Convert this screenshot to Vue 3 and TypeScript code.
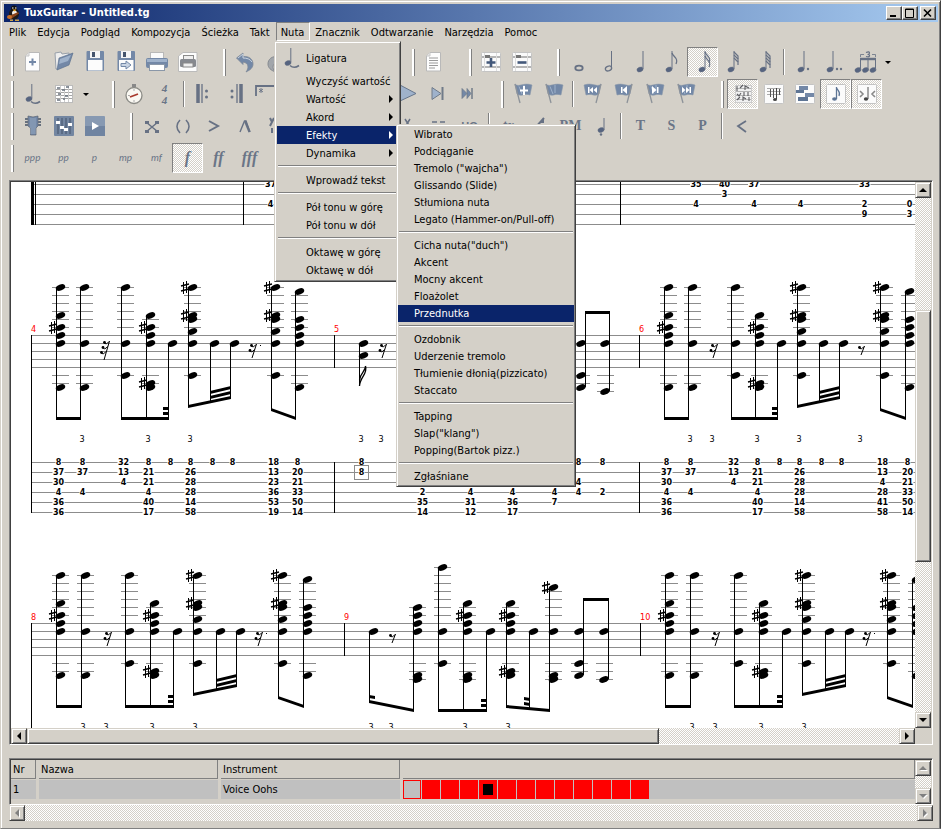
<script setup lang="ts">
import { ref } from 'vue'

/* ---------- icons ---------- */
const INK = '#677184'
const BLUE = '#7388a7'
const PALE = '#9fb2cb'

const head = (x: number, y: number, open = false): string =>
  `<ellipse cx="${x}" cy="${y}" rx="3.2" ry="2.3" transform="rotate(-22 ${x} ${y})" fill="${open ? 'none' : '#566480'}" stroke="${INK}" stroke-width="${open ? 1.3 : 0.4}"/>`
const stem = (x: number, y1: number, y2: number): string =>
  `<path d="M${x} ${y1}V${y2}" stroke="${INK}" stroke-width="1"/>`
const flag = (x: number, y: number): string =>
  `<path d="M${x} ${y}C${x + 1} ${y + 4} ${x + 7} ${y + 5} ${x + 4} ${y + 11}" fill="none" stroke="${INK}" stroke-width="1.3"/>`
const shortFlags = (x: number, n: number): string =>
  Array.from({ length: n }, (_, i) => `<path d="M${x} ${2 + i * 3}l4 4v3" fill="none" stroke="${INK}" stroke-width="1.2"/>`).join('')
const page = `<path d="M8 2.5H18.500V21H4.500V6Z" fill="#fdfdfd" stroke="#b9b9b9"/><path d="M8 2.500V6H4.500" fill="#e4e4e4" stroke="#c8c8c8"/>`
const tile = `<rect x="2.500" y="2.500" width="19" height="19" rx="1" fill="#fbfbfb" stroke="#c4c4c4"/>`
const floppy = `<rect x="3.500" y="1" width="17.500" height="20" rx="1" fill="${BLUE}"/><rect x="7" y="1" width="10" height="7" fill="#f5f5f5"/><rect x="9" y="2" width="3" height="5" fill="#44546c"/><rect x="5" y="10" width="14.500" height="10.500" fill="#fcfcfc"/>`
const pennant = `<path d="M4 2C8 6 12 0 21 3L19 13C13 11 10 15 6 12Z" fill="${BLUE}" stroke="#8b98aa" stroke-width=".6"/><path d="M8 4.500L11 12M13 3V11" stroke="${PALE}"/><path d="M4 2L9 21" stroke="#8d9299" stroke-width="1.300"/>`
const pennantLeft = `<path d="M20 2C16 6 12 0 3 3L5 13C11 11 14 15 18 12Z" fill="${BLUE}" stroke="#8b98aa" stroke-width=".6"/><path d="M20 2L15 21" stroke="#8d9299" stroke-width="1.300"/>`
const white = (d: string): string => `<path d="${d}" fill="#fff"/>`

const icons: Record<string, string> = {
  new: page + `<path d="M11.500 8.500V15.500M8 12H15" stroke="${BLUE}" stroke-width="2"/>`,
  open: `<path d="M3 3L9 2L10 4L17 3V8L6 19H4Z" fill="#eee" stroke="#98a0aa"/><path d="M7 8L21 3L17 15L5 20Z" fill="${BLUE}" stroke="#566b8a" stroke-width=".6"/><path d="M8 9L19 5L16 11L7 14Z" fill="${PALE}"/>`,
  save: floppy,
  saveAs: floppy + `<path d="M7 13.500H12V11L17 15L12 19V16.500H7Z" fill="#c9d4e3" stroke="${BLUE}"/>`,
  print: `<rect x="5.500" y="2.500" width="13" height="8" fill="#fafafa" stroke="#b8b8b8"/><rect x="1" y="8" width="22" height="10" rx="2" fill="${BLUE}"/><rect x="2" y="9" width="20" height="3" fill="${PALE}"/><rect x="4.500" y="14.500" width="15" height="6" fill="#fff" stroke="#8a97a8"/>`,
  preview: `<path d="M7 2.500H21V21.500H2.500V6Z" fill="#fdfdfd" stroke="#bbb"/><rect x="7.500" y="5.500" width="10" height="5" fill="#eee" stroke="#8b8b8b"/><rect x="4" y="9" width="16" height="8" rx="1.500" fill="#86898f"/><rect x="7" y="13" width="10" height="4" fill="#eee" stroke="#888"/>`,
  undo: `<path d="M3.500 8L10 3V6.500C16 6 20 9 20 14C20 18 17 20 13 22C16 18 16 13 10 12V14.500Z" fill="${BLUE}" stroke="#7d8897" stroke-width=".8"/><path d="M5 8L10 4V8C14 8 17 9 19 12" fill="none" stroke="#c9d3df"/>`,
  redo: `<path d="M20.500 8L14 3V6.500C8 6 4 9 4 14C4 18 7 20 11 22C8 18 8 13 14 12V14.500Z" fill="#a2a6ab" stroke="#868a90"/>`,
  score: page + `<path d="M7 8H16M7 10.500H16M7 13H16M7 15.500H16M7 18H13" stroke="#9a9a9a"/>`,
  trackAdd: tile + `<path d="M3 7H21M3 17H21" stroke="#b5b5b5" stroke-width="2"/><path d="M5.500 3V21M17.500 3V21" stroke="#ddd"/><rect x="6" y="5" width="5" height="3" fill="#777"/><path d="M12 8V17M7.500 12.500H16.500" stroke="#43587a" stroke-width="2.600"/>`,
  trackDel: tile + `<path d="M3 7H21M3 17H21" stroke="#b5b5b5" stroke-width="2"/><path d="M5.500 3V21M17.500 3V21" stroke="#ddd"/><rect x="6" y="5" width="5" height="3" fill="#777"/><path d="M7.500 12.500H16.500" stroke="#43587a" stroke-width="2.600"/>`,
  whole: `<ellipse cx="12" cy="18" rx="3.700" ry="2.400" fill="none" stroke="${INK}" stroke-width="1.800"/>`,
  half: head(10.5, 18.5, true) + stem(13.5, 1, 18),
  quarter: head(11, 19.5) + stem(14, 1, 19),
  eighth: head(9, 19.5) + stem(12, 1, 19) + flag(12, 3),
  sixteenth: head(11, 19.5) + stem(14, 1, 19) + flag(14, 2) + flag(14, 6),
  thirty: head(9, 19.5) + stem(12, 1, 19) + shortFlags(12, 3),
  sixty: head(10, 19.5) + stem(13, 1, 19) + shortFlags(13, 4),
  dotted: head(9, 19.5) + stem(12, 1, 19) + `<circle cx="16" cy="19" r="1.200" fill="${INK}"/>`,
  dotted2: head(7, 19.5) + stem(10, 1, 19) + `<circle cx="14" cy="19" r="1.200" fill="${INK}"/><circle cx="18" cy="19" r="1.200" fill="${INK}"/>`,
  tuplet: head(4, 20) + head(11.5, 20) + head(19, 20) + stem(6.5, 9, 20) + stem(14, 9, 20) + stem(21.5, 9, 20) + `<path d="M6 9H22" stroke="${INK}" stroke-width="2.400"/><path d="M6.500 7V4.500H10M18 4.500H21.500V7" fill="none" stroke="${INK}" stroke-width=".8"/><path d="M12 2.500Q15.500 1 15.500 3Q15.500 4.500 13.500 4.500Q16 4.500 15.500 6Q15 7.500 12 6.500" fill="none" stroke="${INK}" stroke-width="1.200"/>`,
  tie: head(8, 17) + stem(10.8, 2, 16) + `<path d="M10 19.500Q14 23 19 19.500" fill="none" stroke="${INK}" stroke-width="1.600"/>`,
  staff: `<rect x="3.500" y="3.500" width="17" height="17" fill="#fff" stroke="#bbb"/><path d="M4 7.500H20M4 10.500H20M4 13.500H20M4 16.500H20" stroke="#a5a5a5"/><path d="M8.500 4V20M12.500 4V20M16.500 4V20" stroke="#ccc"/><path d="M5 6h3M10 8h3M14 5h3M6 12h3M13 14h3M5 18h3M11 17h2" stroke="#68717e" stroke-width="1.500"/>`,
  metronome: `<circle cx="12" cy="13.500" r="8" fill="#faf8f2" stroke="#8a8a85" stroke-width="1.300"/><path d="M10 2H14V5H10Z" fill="#888"/><path d="M8 15L16 12" stroke="#a8392c" stroke-width="1.800"/><path d="M12 7V9M12 18V20M6 13.500H8" stroke="#aaa"/>`,
  repeatOpen: `<path d="M6 2V21" stroke="${INK}" stroke-width="3.500"/><path d="M10 2V21" stroke="${INK}" stroke-width="1.300"/><circle cx="14.500" cy="9" r="1.500" fill="${INK}"/><circle cx="14.500" cy="15" r="1.500" fill="${INK}"/>`,
  repeatClose: `<path d="M18 2V21" stroke="${INK}" stroke-width="3.500"/><path d="M14 2V21" stroke="${INK}" stroke-width="1.300"/><circle cx="9" cy="9" r="1.500" fill="${INK}"/><circle cx="9" cy="15" r="1.500" fill="${INK}"/>`,
  repeatAlt: `<path d="M2 14V4H24" fill="none" stroke="${INK}" stroke-width="1.800"/><path d="M7 6V11M5 7L9 10M9 7L5 10" stroke="${INK}" stroke-width=".9"/>`,
  first: `<path d="M5 6V18M11 6L6 12L11 18ZM17 6L12 12L17 18Z" fill="${BLUE}" stroke="#707b89"/>`,
  prev: `<path d="M6 6V18M16 6L7 12L16 18Z" fill="${BLUE}" stroke="#707b89"/>`,
  stop: `<rect x="5" y="5" width="13" height="13" fill="${BLUE}"/>`,
  play: `<path d="M5 3L21 11.500L5 19Z" fill="${PALE}" stroke="#66758b"/>`,
  next: `<path d="M6 5.500L15 11.500L6 17.500Z" fill="${PALE}" stroke="#707b89"/><path d="M16.500 5V18" stroke="#707b89" stroke-width="2"/>`,
  last: `<path d="M5 6.500L10 11.500L5 16.500ZM10 6.500L14 11.500L10 16.500Z" fill="${BLUE}" stroke="#707b89" stroke-width=".8"/><path d="M15 6V17" stroke="#707b89" stroke-width="1.500"/>`,
  markAdd: pennant + `<path d="M13 4V13M9 8.500H17" stroke="#fff" stroke-width="2"/>`,
  markList: pennant,
  markFirst: pennantLeft + white('M7 5H8.500V11H7ZM12 5V11L8.500 8ZM16 5V11L12.500 8Z'),
  markPrev: pennantLeft + white('M9 5H10.500V11H9ZM15 4V12L10.500 8Z'),
  markNext: pennant + white('M14 5H15.500V11H14ZM9 4V12L13.500 8Z'),
  markLast: pennant + white('M15.500 5H17V11H15.500ZM8 5V11L11.500 8ZM12 5V11L15.500 8Z'),
  multitrack: `<rect x="4.500" y="3.500" width="16" height="17" fill="#f1f1f1" stroke="#ccc"/><path d="M5 6.500H20M5 9.500H20M5 13.500H20M5 17.500H20" stroke="#b4b4b4"/><path d="M6 4v5M9 6l3-3M14 8v-4l4 2M6 12l2 2 2-3M13 14v-4M17 10v4M6 18l3-3M12 19v-4l3 2M18 19v-4" fill="none" stroke="#5c5c60" stroke-width="1.100"/>`,
  linear: tile + `<path d="M5 6.500H19M5 9.500H19M5 12.500H19" stroke="#aaa"/><path d="M8.500 7V15M11.500 7V16M17.500 7V13" stroke="#555"/><path d="M14.500 6V17" stroke="#444"/><ellipse cx="13" cy="17.500" rx="2" ry="1.500" fill="#444"/>`,
  edit: tile + `<rect x="6" y="4" width="9" height="4" fill="${BLUE}"/><rect x="3" y="8" width="8" height="3" fill="#5e7595"/><rect x="12" y="11" width="9" height="4" fill="${BLUE}"/><rect x="5" y="15" width="10" height="4" fill="#5e7595"/>`,
  noteTile: tile + `<ellipse cx="10.500" cy="17" rx="2.400" ry="1.800" fill="#5e7595"/><path d="M12.500 17V5C13 9 17 9 15 14" fill="none" stroke="#5e7595" stroke-width="1.300"/>`,
  spread: tile + `<ellipse cx="11" cy="17" rx="2.200" ry="1.700" fill="#444"/><path d="M13 17V5" stroke="#555"/><path d="M5 9L8 12L5 15M20 9L17 12L20 15" fill="none" stroke="#888" stroke-width="1.600"/>`,
  guitar: `<path d="M7 2L12 3L17 2V12L15 14V21H9.500V14L7 12Z" fill="${BLUE}" stroke="#5b6674" stroke-width=".7"/><path d="M4 5H7M4 8H7M4 11H7M17 5H20M17 8H20M17 11H20" stroke="#68717e" stroke-width="2"/><path d="M10 4V20M12 4V20M14 4V20" stroke="#b7c4d6" stroke-width=".5"/>`,
  mixer: `<rect x="2" y="2" width="20" height="20" rx="1" fill="#7386a1"/><path d="M6 4V20M10 4V20M14 4V20M18 4V20" stroke="#44536a"/><rect x="4" y="7" width="4" height="3" fill="#fff"/><rect x="8" y="12" width="4" height="3" fill="#fff"/><rect x="12" y="14" width="4" height="3" fill="#fff"/><rect x="16" y="9" width="4" height="3" fill="#fff"/>`,
  player: `<rect x="2" y="2" width="20" height="20" rx="1" fill="#8799b2"/><path d="M2 12H22V22H2Z" fill="#7084a1"/><path d="M9 8L16 12L9 16Z" fill="#fff"/>`,
  dead: `<path d="M6 8L18 18M18 8L6 18" stroke="${INK}" stroke-width="1.500"/><path d="M5 7h4v3h-4zM15 7h4v3h-4zM5 16h4v3h-4zM15 16h4v3h-4z" fill="${INK}"/>`,
  ghost: `<path d="M9 6C5 10 5 15 9 19M15 6C19 10 19 15 15 19" fill="none" stroke="${INK}" stroke-width="1.600"/>`,
  accent: `<path d="M7 7L16 12L7 17" fill="none" stroke="${INK}" stroke-width="2"/>`,
  heavy: `<path d="M7 18L11.500 7L13 7L17 18" fill="none" stroke="${INK}" stroke-width="1.400"/><path d="M12 7L16.500 18" stroke="${INK}" stroke-width="2.200"/>`,
  harmonic: `<path d="M6 4L8 8M10 4L6 12M8 14V19" stroke="${INK}" stroke-width="2"/>`,
  grace: `<path d="M9 5L14 13M14 5L9 13" stroke="${INK}" stroke-width="1.500"/>`,
  bend: `<path d="M5 8H10M13 8H18" stroke="${INK}" stroke-width="1.500"/>`,
  slide: `<path d="M8 13L16 4" stroke="${INK}" stroke-width="2"/><path d="M11 9l5-5v5z" fill="${INK}"/>`,
  staccato: head(11, 16) + stem(14, 4, 16) + `<circle cx="11" cy="20.500" r="1.200" fill="${INK}"/>`,
  fade: `<path d="M16 7L8 12L16 18" fill="none" stroke="${INK}" stroke-width="1.800"/>`,
}

interface Tool { kind?: 'sep' | 'arrow'; id?: string; label?: string; text?: string; style?: string; on?: boolean }
interface Band { width?: number; tools: Tool[] }
const b = (id: string, label: string, on = false): Tool => ({ id, label, on })
const t = (text: string, style: string, on = false): Tool => ({ text, style, on })
const sep: Tool = { kind: 'sep' }
const arrow: Tool = { kind: 'arrow' }

const toolbars: Band[][] = [
  [
    { width: 212, tools: [b('new', 'Nowy'), b('open', 'Otwórz'), b('save', 'Zapisz'), b('saveAs', 'Zapisz jako'), b('print', 'Drukuj'), b('preview', 'Podgląd wydruku')] },
    { width: 189, tools: [b('undo', 'Cofnij'), b('redo', 'Ponów')] },
    { width: 57, tools: [b('score', 'Właściwości')] },
    { width: 88, tools: [b('trackAdd', 'Dodaj ścieżkę'), b('trackDel', 'Usuń ścieżkę')] },
    { tools: [b('whole', 'Cała nuta'), b('half', 'Półnuta'), b('quarter', 'Ćwierćnuta'), b('eighth', 'Ósemka'), b('sixteenth', 'Szesnastka', true), b('thirty', 'Trzydziestodwójka'), b('sixty', 'Sześćdziesięcioczwórka'), sep, b('dotted', 'Kropka'), b('dotted2', 'Dwie kropki'), b('tuplet', 'Triola'), arrow] },
  ],
  [
    { width: 101, tools: [b('tie', 'Ligatura'), b('staff', 'Akord'), arrow] },
    { width: 180, tools: [b('metronome', 'Tempo'), t('4/4', 'meter'), sep, b('repeatOpen', 'Początek powtórki'), b('repeatClose', 'Koniec powtórki'), b('repeatAlt', 'Volta')] },
    { width: 209, tools: [b('first', 'Pierwszy takt'), b('prev', 'Poprzedni takt'), b('stop', 'Stop'), b('play', 'Odtwarzaj'), b('next', 'Następny takt'), b('last', 'Ostatni takt')] },
    { width: 220, tools: [b('markAdd', 'Dodaj znacznik'), b('markList', 'Lista znaczników'), sep, b('markFirst', 'Pierwszy znacznik'), b('markPrev', 'Poprzedni znacznik'), b('markNext', 'Następny znacznik'), b('markLast', 'Ostatni znacznik')] },
    { tools: [b('multitrack', 'Wiele ścieżek', true), b('linear', 'Układ liniowy'), b('edit', 'Edycja'), b('noteTile', 'Partytura', true), b('spread', 'Zwarty układ', true)] },
  ],
  [
    { width: 119, tools: [b('guitar', 'Gryf'), b('mixer', 'Mikser'), b('player', 'Transport')] },
    { tools: [b('dead', 'Stłumiona nuta'), b('ghost', 'Cicha nuta'), b('accent', 'Akcent'), b('heavy', 'Mocny akcent'), b('harmonic', 'Flażolet'), sep, b('bend', 'Podciąganie'), b('slide', 'Glissando'), b('bend', 'Wibrato'), b('grace', 'Przednutka'), b('bend', 'Wajcha'), t('HO', 'sans'), sep, t('tr', 'serif'), b('slide', 'Uderzenie tremolo'), t('PM', 'serif'), b('staccato', 'Staccato'), sep, t('T', 'serif'), t('S', 'serif'), t('P', 'serif'), sep, b('fade', 'Zgłaśnianie')] },
  ],
  [
    { tools: [t('ppp', 'soft'), t('pp', 'soft'), t('p', 'soft'), t('mp', 'soft'), t('mf', 'soft'), t('f', 'loud', true), t('ff', 'loud'), t('fff', 'loud')] },
  ],
]

/* ---------- menus ---------- */
const menus = ['Plik', 'Edycja', 'Podgląd', 'Kompozycja', 'Ścieżka', 'Takt', 'Nuta', 'Znacznik', 'Odtwarzanie', 'Narzędzia', 'Pomoc']
const openMenu = ref('Nuta')

interface Entry { text: string; more?: boolean; icon?: string }
const noteMenu: Entry[][] = [
  [{ text: 'Ligatura', icon: 'tie' }, { text: 'Wyczyść wartość' }, { text: 'Wartość', more: true }, { text: 'Akord', more: true }, { text: 'Efekty', more: true }, { text: 'Dynamika', more: true }],
  [{ text: 'Wprowadź tekst' }],
  [{ text: 'Pół tonu w górę' }, { text: 'Pół tonu w dół' }],
  [{ text: 'Oktawę w górę' }, { text: 'Oktawę w dół' }],
]
const effectMenu: string[][] = [
  ['Wibrato', 'Podciąganie', 'Tremolo ("wajcha")', 'Glissando (Slide)', 'Stłumiona nuta', 'Legato (Hammer-on/Pull-off)'],
  ['Cicha nuta("duch")', 'Akcent', 'Mocny akcent', 'Floażolet', 'Przednutka'],
  ['Ozdobnik', 'Uderzenie tremolo', 'Tłumienie dłonią(pizzicato)', 'Staccato'],
  ['Tapping', 'Slap("klang")', 'Popping(Bartok pizz.)'],
  ['Zgłaśniane'],
]
const activeEntry = ref('Efekty')
const activeEffect = ref('Przednutka')

/* ---------- score ---------- */
interface Chord { x: number; notes: string; end: number; up?: boolean }
interface Beam { x1: number; y1: number; x2: number; y2: number }
interface Rest { x: number; y: number; hooks: number; dot?: boolean }
interface Measure { n: number; bar: number; chords: Chord[]; beams: Beam[]; rests: Rest[] }

const shapes = ['-12 -5 -2# 0 2 13', '-12 2 13', '-12 2 10', '-5 -2# 0 2 12# 13', '2', '-12# -5# -4 -1 2 10', '2', '2', '-12# -5# -4 -1 2 10', '-11 -4 -2 0 2 13']
const ends = [83, 83, 83, 83, 83, 71, 66, 62, 74, 83]

function ensemble(n: number, bar: number, xs: number[], rests: Rest[]): Measure {
  const [a, b2, c, , e, f, g, h, i, j] = xs
  return {
    n, bar, rests,
    chords: xs.map((x, k) => ({ x, notes: shapes[k], end: ends[k] })),
    beams: [
      { x1: a, y1: 83, x2: b2 + 1, y2: 83 },
      { x1: c, y1: 83, x2: e + 1, y2: 83 },
      { x1: e - 5, y1: 73, x2: e + 1, y2: 73 },
      { x1: e - 5, y1: 78, x2: e + 1, y2: 78 },
      { x1: f, y1: 71, x2: h + 1, y2: 62 },
      { x1: g, y1: 57, x2: h + 1, y2: 52 },
      { x1: g, y1: 62, x2: h + 1, y2: 57 },
      { x1: i, y1: 74, x2: j + 1, y2: 83 },
    ],
  }
}

const systems: { top: number; measures: Measure[]; triplets: number[] }[] = [
  {
    top: 335,
    triplets: [82, 148, 190, 361, 381, 690, 712, 757, 799, 860],
    measures: [
      ensemble(4, 31, [56, 80, 121, 146, 168, 188, 210, 230, 271, 295], [{ x: 106, y: 6, hooks: 3 }, { x: 253, y: 9, hooks: 2, dot: true }]),
      {
        n: 5, bar: 334,
        chords: [{ x: 359, notes: '2 5', end: 51 }, { x: 585, notes: '2 10 13', end: -23, up: true }, { x: 609, notes: '2 14', end: -23, up: true }],
        beams: [{ x1: 585, y1: -23, x2: 610, y2: -23 }],
        rests: [{ x: 383, y: 9, hooks: 2 }],
      },
      ensemble(6, 639, [664, 688, 731, 755, 777, 797, 819, 839, 880, 905], [{ x: 714, y: 9, hooks: 2 }, { x: 861, y: 11, hooks: 1 }]),
    ],
  },
  {
    top: 623,
    triplets: [83, 106, 152, 195, 371, 391, 465, 508, 692, 715, 761, 804],
    measures: [
      ensemble(8, 31, [56, 81, 125, 150, 173, 193, 216, 236, 278, 303], [{ x: 108, y: 9, hooks: 2 }, { x: 259, y: 9, hooks: 2, dot: true }]),
      {
        n: 9, bar: 344,
        chords: [
          { x: 369, notes: '2', end: 78 }, { x: 413, notes: '-4 -2 0 2 13 14', end: 87 },
          { x: 438, notes: '-14 2 10', end: 87 }, { x: 463, notes: '-5 -2# 0 2 13 14', end: 87 }, { x: 486, notes: '2', end: 87 },
          { x: 506, notes: '-5 -2# 0 2 12# 13', end: 83 }, { x: 529, notes: '2', end: 85 }, { x: 549, notes: '-9# 2 13 14', end: 87 },
          { x: 583, notes: '2 10 13', end: -24, up: true }, { x: 608, notes: '2 14', end: -24, up: true },
        ],
        beams: [
          { x1: 369, y1: 78, x2: 414, y2: 87 }, { x1: 369, y1: 73, x2: 375, y2: 74 },
          { x1: 438, y1: 87, x2: 487, y2: 87 }, { x1: 481, y1: 77, x2: 487, y2: 77 }, { x1: 481, y1: 82, x2: 487, y2: 82 },
          { x1: 506, y1: 83, x2: 550, y2: 87 }, { x1: 524, y1: 75, x2: 530, y2: 76 }, { x1: 524, y1: 80, x2: 530, y2: 81 },
          { x1: 583, y1: -24, x2: 609, y2: -24 },
        ],
        rests: [{ x: 392, y: 11, hooks: 1 }],
      },
      ensemble(10, 640, [665, 690, 734, 759, 782, 802, 825, 845, 887, 912], [{ x: 716, y: 9, hooks: 2 }, { x: 867, y: 9, hooks: 2, dot: true }]),
    ],
  },
]

const positions = (c: Chord) => c.notes.split(' ').map(s => ({ p: parseInt(s), sharp: s.endsWith('#') }))
const noteX = (c: Chord): number => (c.up ? c.x - 4 : c.x + 4.5)
function ledgers(c: Chord): number[] {
  const ps = positions(c).map(n => n.p)
  const out: number[] = []
  for (let p = -2; p >= Math.min(...ps); p -= 2) out.push(p)
  for (let p = 10; p <= Math.max(...ps); p += 2) out.push(p)
  return out
}
function stemSpan(c: Chord): { y: number; h: number } {
  const ps = positions(c).map(n => n.p * 4)
  return c.up ? { y: c.end, h: Math.max(...ps) - c.end } : { y: Math.min(...ps), h: c.end - Math.min(...ps) }
}
const beamPoints = (m: Beam): string => `${m.x1},${m.y1 - 1} ${m.x2},${m.y2 - 1} ${m.x2},${m.y2 + 2} ${m.x1},${m.y1 + 2}`
function restPath(r: Rest): string {
  let d = ''
  for (let i = 0; i < r.hooks; i++) {
    const x = r.x + 3 - i * 1.5
    const y = r.y + i * 5
    d += `M${x - 5} ${y + 1.500}q2 3 5 -1`
  }
  return d + `M${r.x + 3.5} ${r.y}L${r.x + 1 - r.hooks} ${r.y + 4 + r.hooks * 5}`
}
const restDots = (r: Rest) => Array.from({ length: r.hooks }, (_, i) => ({ x: r.x - 1.5 - i * 1.5, y: r.y + 1.5 + i * 5 }))

const fullTab = ['8 37 30 4 36 36', '8 37 - 4', '32 13 4', '8 21 21 4 40 17', '8', '8 26 28 28 14 58', '8', '8']
const tail4 = ['18 13 23 36 53 19', '8 20 21 33 50 14']
const tail6 = ['18 13 4 28 41 58', '8 20 21 33 50 14']
const columns: [number, string][] = [
  ...systems[0].measures[0].chords.map((c, i): [number, string] => [c.x + 2.5, [...fullTab, ...tail4][i]]),
  [361.5, '8 8'], [422.5, '- - - 2 35 14'], [470.5, '- - - 4 31 12'], [512.5, '- - - 4 36 17'], [554.5, '- - - 4 7'], [578.5, '8 - 4 4'], [602.5, '8 - - 2'],
  ...systems[0].measures[2].chords.map((c, i): [number, string] => [c.x + 2.5, [...fullTab, ...tail6][i]]),
]
const upper: [number, string][] = [
  [270.5, '37 - 4'], [696, '35 - 4'], [724.5, '40 3'], [754, '37 - 4'], [800.5, '- - 4'], [864.5, '33 - 2 9'], [909.5, '- - 0 3'],
]
const frets = (cols: [number, string][], top: number) =>
  cols.flatMap(([x, s]) => s.split(' ').map((v, i) => ({ x, y: top + i * 10, v })).filter(f => f.v !== '-'))
const fretList = [...frets(upper, 184), ...frets(columns, 462)]

/* ---------- tracks ---------- */
const cells = Array.from({ length: 13 }, (_, i) => (i === 0 ? 'empty' : i === 4 ? 'current' : 'full'))
</script>

<template>
  <div class="window">
    <header class="title">
      <svg class="logo" viewBox="0 0 16 16" aria-hidden="true">
        <ellipse cx="8" cy="9" rx="5" ry="5.500" fill="#1d1a18" /><circle cx="8" cy="3.500" r="3" fill="#111" />
        <ellipse cx="8.500" cy="8" rx="2.500" ry="2.500" fill="#f2efe8" /><path d="M6.500 4.500h4l-2 2z" fill="#f2a51c" />
        <path d="M1 12L12 7l1 1.500L5 14z" fill="#8a431a" /><ellipse cx="3.500" cy="12" rx="2.500" ry="2" fill="#c86f2a" />
        <path d="M4 14.500h3v1.500h-3zM9 14.500h4v1.500h-4z" fill="#c9a04a" /><path d="M6 2.500h1.500v1h-1.500zM9 2.500h1.500v1h-1.500z" fill="#fff" />
      </svg>
      <h1>TuxGuitar - Untitled.tg</h1>
      <div class="caption-buttons">
        <button aria-label="Minimalizuj"><svg viewBox="0 0 12 10"><path d="M3 8H9" stroke="#000" stroke-width="2" /></svg></button>
        <button aria-label="Maksymalizuj"><svg viewBox="0 0 12 10"><path d="M2.500 1H10.500V9.500H2.500ZM2 1.500H11" fill="none" stroke="#000" /></svg></button>
        <button class="close" aria-label="Zamknij"><svg viewBox="0 0 12 10"><path d="M3 1.500L10 8.500M10 1.500L3 8.500" stroke="#000" stroke-width="1.600" /></svg></button>
      </div>
    </header>

    <nav class="menubar">
      <button v-for="m in menus" :key="m" :class="{ open: m === openMenu }" @click="openMenu = m">{{ m }}</button>
    </nav>

    <div class="toolbars">
      <div v-for="(bar, r) in toolbars" :key="r" class="toolbar" role="toolbar">
        <div v-for="(band, k) in bar" :key="k" class="band" :style="band.width ? { width: band.width + 'px' } : {}">
          <span class="handle"></span>
          <template v-for="(tool, i) in band.tools" :key="i">
            <span v-if="tool.kind === 'sep'" class="sep"></span>
            <button v-else-if="tool.kind === 'arrow'" class="drop" aria-label="Więcej"><span class="tri down"></span></button>
            <button v-else class="tool" :class="{ on: tool.on }" :aria-label="tool.label">
              <svg v-if="tool.id" viewBox="0 0 24 24" v-html="icons[tool.id]"></svg>
              <span v-else-if="tool.style === 'meter'" class="meter"><i>4</i><i>4</i></span>
              <span v-else :class="tool.style">{{ tool.text }}</span>
            </button>
          </template>
        </div>
      </div>
    </div>

    <main class="score">
      <svg class="sheet" role="img" aria-label="Partytura">
        <g transform="translate(-11 -182)">
          <g shape-rendering="crispEdges" fill="#8c8c8c">
            <rect v-for="i in 5" :key="'u' + i" x="31" :y="174 + i * 10" width="2000" height="1" />
            <rect v-for="i in 6" :key="'t' + i" x="31" :y="452 + i * 10" width="2000" height="1" />
            <template v-for="s in systems" :key="s.top">
              <rect v-for="i in 5" :key="i" x="31" :y="s.top - 8 + i * 8" width="2000" height="1" />
            </template>
          </g>
          <g shape-rendering="crispEdges">
            <rect x="31" y="174" width="3" height="51" /><rect x="35" y="174" width="1" height="51" />
            <rect x="243" y="174" width="1" height="51" /><rect x="620" y="174" width="1" height="51" />
            <rect x="31" y="335" width="1" height="178" /><rect x="31" y="623" width="1" height="178" />
            <rect x="334" y="462" width="1" height="51" /><rect x="639" y="462" width="1" height="51" />
          </g>

          <g v-for="s in systems" :key="s.top" :transform="`translate(0 ${s.top})`">
            <g v-for="m in s.measures" :key="m.n">
              <rect :x="m.bar" y="0" width="1" height="33" shape-rendering="crispEdges" />
              <text class="number" :x="m.bar" y="-3">{{ m.n }}</text>
              <g v-for="c in m.chords" :key="c.x">
                <g shape-rendering="crispEdges">
                  <rect v-for="l in ledgers(c)" :key="l" :x="c.up ? c.x - 12 : c.x - 4" :y="l * 4" width="17" height="1" fill="#8c8c8c" />
                  <rect :x="c.x" :y="stemSpan(c).y" width="1" :height="stemSpan(c).h" />
                </g>
                <template v-for="n in positions(c)" :key="n.p">
                  <ellipse rx="4.900" ry="3" :transform="`translate(${noteX(c)} ${n.p * 4 + 0.5}) rotate(-20)`" />
                  <g v-if="n.sharp" :transform="`translate(${c.x - 4} ${n.p * 4})`">
                    <path d="M-1 -5H0V7H-1ZM2 -6H3V6H2Z" shape-rendering="crispEdges" />
                    <path d="M-3 -1L5 -3M-3 4L5 2" stroke="#000" stroke-width="1.500" />
                  </g>
                </template>
              </g>
              <polygon v-for="(bm, i) in m.beams" :key="'b' + i" :points="beamPoints(bm)" />
              <g v-for="(rs, i) in m.rests" :key="'r' + i">
                <path :d="restPath(rs)" fill="none" stroke="#000" />
                <circle v-for="(dt, k) in restDots(rs)" :key="k" :cx="dt.x" :cy="dt.y" r="1.400" />
                <rect v-if="rs.dot" :x="rs.x + 7" :y="rs.y + 1" width="1" height="1" />
              </g>
            </g>
            <text v-for="x in s.triplets" :key="x" class="triplet" :x="x" y="107">3</text>
          </g>
          <path d="M359.500 386C360 377 368 374 365.500 366M359.500 380C360 373 366 371 365.500 366" fill="none" stroke="#000" stroke-width="1.300" />

          <g v-for="(f, i) in fretList" :key="'f' + i">
            <rect :x="f.x - f.v.length * 3" :y="f.y - 3" :width="f.v.length * 6" height="7" fill="#fff" />
            <text class="fret" :x="f.x" :y="f.y + 3">{{ f.v }}</text>
          </g>
          <rect x="354.500" y="465.500" width="14" height="14" fill="none" stroke="#8c8c8c" />
        </g>
      </svg>
      <div class="vscroll">
        <button class="cap" aria-label="W górę"><span class="tri up"></span></button>
        <div class="track"><div class="thumb vthumb"></div></div>
        <button class="cap" aria-label="W dół"><span class="tri down"></span></button>
      </div>
      <div class="hscroll">
        <button class="cap" aria-label="W lewo"><span class="tri left"></span></button>
        <div class="track"><div class="thumb hthumb"></div></div>
        <button class="cap" aria-label="W prawo"><span class="tri right"></span></button>
      </div>
    </main>

    <section class="tracks">
      <table>
        <colgroup><col class="c-nr" /><col class="c-name" /><col class="c-name" /><col /></colgroup>
        <thead><tr><th>Nr</th><th>Nazwa</th><th>Instrument</th><th></th></tr></thead>
        <tbody>
          <tr>
            <td>1</td><td></td><td>Voice Oohs</td>
            <td class="line"><div class="cells"><span v-for="(c, i) in cells" :key="i" :class="c"></span></div></td>
          </tr>
        </tbody>
      </table>
      <div class="vscroll">
        <button class="cap" disabled aria-label="W górę"><span class="tri up"></span></button>
        <div class="track"></div>
        <button class="cap" disabled aria-label="W dół"><span class="tri down"></span></button>
      </div>
    </section>
    <div class="hscroll footer-scroll">
      <button class="cap" disabled aria-label="W lewo"><span class="tri left"></span></button>
      <div class="track"></div>
      <button class="cap" disabled aria-label="W prawo"><span class="tri right"></span></button>
    </div>

    <div class="popup note-menu" role="menu">
      <template v-for="(group, g) in noteMenu" :key="g">
        <hr v-if="g" />
        <button v-for="e in group" :key="e.text" role="menuitem" :class="{ tall: e.icon, active: e.text === activeEntry }" @mouseenter="activeEntry = e.text">
          <span class="icon"><svg v-if="e.icon" viewBox="0 0 24 24" v-html="icons[e.icon]"></svg></span>
          <span class="label">{{ e.text }}</span>
          <span v-if="e.more" class="tri right"></span>
        </button>
      </template>
    </div>
    <div class="popup effect-menu" role="menu">
      <template v-for="(group, g) in effectMenu" :key="g">
        <hr v-if="g" />
        <button v-for="e in group" :key="e" role="menuitem" :class="{ active: e === activeEffect }" @mouseenter="activeEffect = e">{{ e }}</button>
      </template>
    </div>
  </div>
</template>

<style>
body { margin: 0; background: #d4d0c8; }
</style>

<style scoped>
.window {
  position: relative;
  display: flex;
  flex-direction: column;
  box-sizing: border-box;
  min-height: 100vh;
  padding: 3px 2px 7px 3px;
  border: 1px solid;
  border-color: #d4d0c8 #404040 #808080 #d4d0c8;
  box-shadow: inset 1px 1px 0 #fff, inset -1px 0 0 #808080;
  background: #d4d0c8;
  color: #000;
  font: 11px/14px "DejaVu Sans Condensed", "DejaVu Sans", sans-serif;
}
button {
  margin: 0;
  padding: 0;
  border: 0;
  background: none;
  color: inherit;
  font: inherit;
  text-align: left;
  white-space: nowrap;
}

.title {
  display: flex;
  align-items: center;
  height: 18px;
  padding: 0 2px;
  background: linear-gradient(90deg, #0a246a, #a6caf0);
}
.logo { width: 16px; height: 16px; margin-right: 2px; }
h1 { flex: 1; margin: 0; color: #fff; font-size: 11px; line-height: 18px; font-weight: bold; }
.caption-buttons { display: flex; }
.caption-buttons button {
  box-sizing: border-box;
  width: 16px;
  height: 14px;
  border: 1px solid;
  border-color: #fff #404040 #404040 #fff;
  box-shadow: inset -1px -1px 0 #808080;
  background: #d4d0c8;
}
.caption-buttons .close { margin-left: 2px; }
.caption-buttons svg { display: block; width: 12px; height: 10px; }

.menubar { display: flex; height: 20px; }
.menubar button { height: 20px; padding: 1px 4px 0; border: 1px solid transparent; border-right-width: 2px; }
.menubar .open { height: 19px; padding: 2px 5px 0 4px; border-width: 1px; border-color: #808080 #fff #fff #808080; }

.toolbars { display: grid; gap: 2px; margin: 5px 0 7px; padding-left: 7px; }
.toolbar { display: flex; height: 30px; }
.band { display: flex; flex: none; align-items: center; }
.handle { width: 1px; height: 27px; margin-right: 3px; background: #fff; border-right: 1px solid #808080; border-left: 1px solid #fff; }
.sep { width: 1px; height: 26px; margin: 0 3px; background: #808080; border-right: 1px solid #fff; }
.tool {
  display: flex;
  align-items: center;
  justify-content: center;
  box-sizing: border-box;
  width: 31px;
  height: 30px;
  border: 1px solid transparent;
}
.tool.on {
  border-color: #808080 #fff #fff #808080;
  background: repeating-conic-gradient(#fff 0 25%, #d4d0c8 0 50%) 0 0 / 2px 2px;
}
.tool svg { width: 24px; height: 24px; }
.tool span { color: #6a7587; }
.drop { display: flex; justify-content: center; width: 14px; }
.soft { padding-bottom: 2px; font: italic 10px/14px Lato, sans-serif; }
.loud { font: italic bold 16px/16px "Liberation Serif", serif; }
.serif { font: bold 14px/16px "Liberation Serif", serif; }
.sans { font: bold 11px/14px "Liberation Sans", sans-serif; }
.meter { display: grid; font: italic bold 11px/12px "Liberation Serif", serif; }

.tri { display: block; width: 0; height: 0; border: 0 solid transparent; }
.tri.down { border-width: 4px 4px 0; border-top-color: #000; }
.tri.up { border-width: 0 4px 4px; border-bottom-color: #000; }
.tri.left { border-width: 4px 4px 4px 0; border-right-color: #000; }
.tri.right { border-width: 4px 0 4px 4px; border-left-color: #000; }
.drop .tri.down { border-width: 3px 3px 0; }

.score {
  display: grid;
  flex: 1;
  grid-template: minmax(0, 1fr) 16px / minmax(0, 1fr) 16px;
  min-height: 400px;
  margin: 0 5px;
  border: 1px solid;
  border-color: #808080 #fff #fff #808080;
  padding: 1px 1px 0 1px;
  box-shadow: inset 1px 1px 0 #404040;
}
.sheet { display: block; width: 100%; height: 100%; overflow: hidden; background: #fff; }
.number { fill: #f00; font-size: 9px; }
.triplet { font-size: 9px; text-anchor: middle; }
.fret { font: bold 8px "DejaVu Sans", sans-serif; text-anchor: middle; }

.vscroll { display: flex; flex-direction: column; width: 16px; }
.hscroll { display: flex; height: 16px; }
.track { display: flex; flex: 1; background: repeating-conic-gradient(#fff 0 25%, #d4d0c8 0 50%) 0 0 / 2px 2px; }
.vscroll .track { flex-direction: column; }
.cap, .thumb {
  box-sizing: border-box;
  border: 1px solid;
  border-color: #d4d0c8 #404040 #404040 #d4d0c8;
  box-shadow: inset 1px 1px 0 #fff, inset -1px -1px 0 #808080;
  background: #d4d0c8;
}
.cap { display: flex; flex: none; align-items: center; justify-content: center; width: 16px; height: 16px; }
.cap:disabled .tri.up { border-bottom-color: #808080; }
.cap:disabled .tri.down { border-top-color: #808080; }
.cap:disabled .tri.left { border-right-color: #808080; }
.cap:disabled .tri.right { border-left-color: #808080; }
.cap:disabled .tri { filter: drop-shadow(1px 1px 0 #fff); }
.vthumb { height: 49%; margin-top: 112px; }
.hthumb { width: 72.5%; }

.tracks {
  display: flex;
  margin: 13px 5px 0;
  border: 1px solid;
  border-color: #808080 #fff #fff #808080;
  padding: 1px 1px 0 1px;
  box-shadow: inset 1px 1px 0 #404040;
}
table { flex: 1; table-layout: fixed; border-collapse: separate; border-spacing: 0; align-self: flex-start; }
.c-nr { width: 28px; }
.c-name { width: 182px; }
th, td { padding: 1px 0 0 2px; border-right: 3px solid #d4d0c8; font-weight: normal; text-align: left; white-space: nowrap; }
th { height: 18px; border-bottom: 1px solid #d4d0c8; box-shadow: inset -1px -1px 0 #808080; }
td { height: 18px; background: #c0c0c0; background-clip: padding-box; }
th:last-child, td:last-child { border-right: 0; }
.line { height: 19px; padding: 0; }
.cells { display: flex; gap: 1px; }
.cells span { box-sizing: border-box; width: 18px; height: 19px; border: 1px solid #f00; background: #f00; }
.cells .empty { background: none; }
.cells .current { border: 4px solid #f00; background: #000; }
.tracks .vscroll { height: 44px; }
.footer-scroll { margin: 0 5px; }

.popup {
  position: absolute;
  display: flex;
  flex-direction: column;
  box-sizing: border-box;
  padding: 1px;
  border: 1px solid;
  border-color: #d4d0c8 #404040 #404040 #d4d0c8;
  box-shadow: inset 1px 1px 0 #fff, inset -1px -1px 0 #808080;
  background: #d4d0c8;
}
.popup hr { width: auto; height: 1px; margin: 3px 1px 4px; border: 0; border-top: 1px solid #808080; background: #fff; }
.popup .active { background: #0a246a; color: #fff; }
.note-menu { top: 40px; left: 273px; width: 127px; padding: 2px; }
.note-menu button { display: flex; align-items: center; height: 18px; }
.note-menu .tall { height: 28px; }
.note-menu .icon { display: flex; flex: none; width: 29px; }
.note-menu svg { width: 24px; height: 24px; margin-left: 3px; }
.note-menu .label { flex: 1; min-width: 0; padding-top: 1px; }
.note-menu .tri { flex: none; margin-right: 5px; }
.note-menu .active .tri { border-left-color: #fff; }
.effect-menu { top: 123px; left: 395px; width: 180px; }
.effect-menu button { height: 17px; padding-left: 16px; }
</style>
